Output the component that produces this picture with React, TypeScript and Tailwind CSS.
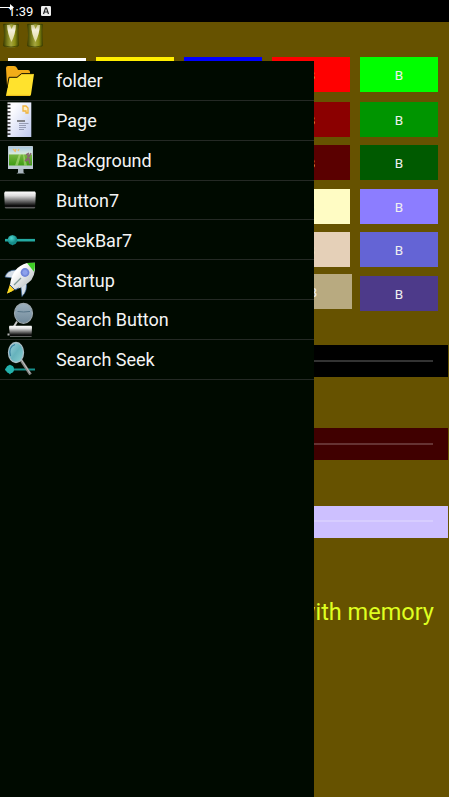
import type { ReactNode } from "react";

const svg = "block h-[39.8px] w-[40px] shrink-0 overflow-visible";

function FolderIcon() {
  return (
    <svg viewBox="0 0 40 39.8" className={svg}>
      <path d="M6 6q0-2 2-2h6q2 0 3 2l1 2h10q2 0 2 2v14H7Z" fill="#f2ad18" />
      <path d="M6 33.5 9.5 16h8l4.500-3.700L34 12l-3 20.500q-.2 1.500-2 1.500H8q-2 0-2-.5Z" fill="#ffe22d" />
      <path d="M7 26 9 15.300h8L21.500 11.600H34" fill="none" stroke="#171800" strokeWidth="1" />
      <path d="M7 33.400h22.500" stroke="#edc31d" strokeWidth="1.200" />
    </svg>
  );
}

function PageIcon() {
  const holes = [3.5, 7.2, 10.9, 14.6, 18.3, 22, 25.7, 29.4, 33.1];
  return (
    <svg viewBox="0 0 40 39.8" className={svg}>
      <defs>
        <linearGradient id="paper" x2="1" y2="1">
          <stop offset=".2" stopColor="#fdfdff" />
          <stop offset="1" stopColor="#bec9ef" />
        </linearGradient>
      </defs>
      <path d="M7.500 1.400H31.300V36H7.500Z" fill="url(#paper)" />
      {holes.map((y) => (
        <path key={y} d={`M7 ${y}h3.500`} stroke="#222" strokeWidth="1.500" />
      ))}
      <path d="M23 5v5h3v2h2V7l-2-2Z" fill="#fff0c6" stroke="#f0b43e" strokeWidth="1.300" />
      <path d="M17 20h8" stroke="#444" strokeWidth="1.200" />
      <path d="M19 22.500h9.500M19 24.500h7M19 26.500h7M19 28.500h5" stroke="#858ba5" strokeWidth=".8" />
    </svg>
  );
}

function MonitorIcon() {
  return (
    <svg viewBox="0 0 40 39.8" className={svg}>
      <defs>
        <linearGradient id="sky" x2="0" y2="1">
          <stop stopColor="#a9c8df" />
          <stop offset=".35" stopColor="#d8e9df" />
          <stop offset=".45" stopColor="#72b33e" />
          <stop offset="1" stopColor="#3d9c13" />
        </linearGradient>
      </defs>
      <path d="M18 28h5.500v3.500l1.500 1H16.500l1.500-1Z" fill="#aab5bd" />
      <rect x="8" y="5" width="25" height="23" rx=".6" fill="#bdc9d3" />
      <path d="M9 6h23v18.500H9Z" fill="url(#sky)" />
      <path d="m19 13-4 11.500h3l3-11.500Zm4 0 1 11.500h3l-3-11.500Z" fill="#c7e993" opacity=".5" />
      <path d="m13 8 2 2m1-2-1 3m4-3-1 2" stroke="#efbd68" strokeWidth="1.300" />
      <path d="m26 14 3-2m-1 1v4l-3 3 4-2 1 5m-1-7 2-4" fill="none" stroke="#896773" strokeWidth="1.500" />
    </svg>
  );
}

function ButtonIcon() {
  return (
    <svg viewBox="0 0 40 39.8" className={svg}>
      <defs>
        <linearGradient id="shade" x2="0" y2="1">
          <stop stopColor="#fff" />
          <stop offset=".25" stopColor="#ddd" />
          <stop offset=".85" stopColor="#080808" />
          <stop offset=".91" stopColor="#111" />
          <stop offset="1" stopColor="#aaa" />
        </linearGradient>
      </defs>
      <path d="M5 10.500h30l.8 1.500-.6 14.500-.7.800H5.500l-.7-.8L4.200 12Z" fill="url(#shade)" />
    </svg>
  );
}

function SeekIcon() {
  return (
    <svg viewBox="0 0 40 39.8" className={svg}>
      <defs>
        <radialGradient id="knob" cx=".4" cy=".3">
          <stop stopColor="#4fd8d0" />
          <stop offset="1" stopColor="#158c89" />
        </radialGradient>
      </defs>
      <path d="M5 19.200h30" stroke="#24aaa2" strokeWidth="2.600" />
      <path d="M12.500 14 17.200 19.200 12.500 24.500 7.800 19.200Z" fill="#1b9692" />
      <circle cx="12.500" cy="19" r="4.800" fill="url(#knob)" />
    </svg>
  );
}

function RocketIcon() {
  return (
    <svg viewBox="0 0 40 39.8" className={svg}>
      <defs>
        <linearGradient id="hull" x1="0" y1="0" x2="1" y2="1">
          <stop offset=".3" stopColor="#fff" />
          <stop offset="1" stopColor="#a7afb2" />
        </linearGradient>
      </defs>
      <path d="M16 9Q7 9 5 16l8 1Zm10 11q2 10-4 15.500l-1-9Z" fill="#d6dfe8" stroke="#416b9e" strokeWidth=".7" />
      <path d="m10 23-3 9.500 8.500-4Z" fill="#ffc82f" />
      <path d="m10 25-3 7.500 5.500-2.500Z" fill="#f7dc24" />
      <path d="M10 24Q12 6 27 2l8-.3Q36 17 28 22 22 27 15 29Z" fill="url(#hull)" />
      <path d="M27 2 35 1.700q0 5-1 9Z" fill="#3ece25" />
      <path d="m10 24 5 5 4-2" fill="none" stroke="#294f86" strokeWidth="1" />
      <path d="m14 24 7-7" stroke="#7e9795" strokeWidth="1.200" />
      <circle cx="25" cy="11.500" r="4.400" fill="#6d82d9" />
      <circle cx="25" cy="11.500" r="3" fill="#8da1ed" stroke="#7187d5" strokeWidth=".7" />
    </svg>
  );
}

function SearchButtonIcon() {
  return (
    <svg viewBox="0 0 40 39.8" className={svg}>
      <defs>
        <linearGradient id="lensGrey" x2="0" y2="1">
          <stop stopColor="#9cb1be" />
          <stop offset="1" stopColor="#71899a" />
        </linearGradient>
      </defs>
      <path d="m17 20.500-3 5" stroke="#c8c8c8" strokeWidth="2" />
      <ellipse cx="23.500" cy="12.300" rx="9" ry="10" fill="url(#lensGrey)" stroke="#9ba7ad" strokeWidth="1.200" />
      <path d="M17.500 10.500q6 1 12.500 0" fill="none" stroke="#557387" strokeWidth="1" />
      <path d="M9.500 24.800h22l.5 1-.4 10H10L9 26Z" fill="url(#shade)" />
      <path d="M7.500 33.500H9.500" stroke="#bbb" strokeWidth="2" />
    </svg>
  );
}

function SearchSeekIcon() {
  return (
    <svg viewBox="0 0 40 39.8" className={svg}>
      <defs>
        <linearGradient id="lensTeal" x2="1" y2="1">
          <stop stopColor="#9fd3df" />
          <stop offset=".5" stopColor="#67b3bd" />
          <stop offset="1" stopColor="#8bd0d0" />
        </linearGradient>
      </defs>
      <path d="M5 29.500h30" stroke="#168f8c" strokeWidth="2" />
      <path d="m10 24.500 4 5-4 5-5-5Z" fill="#20a8a4" />
      <circle cx="10" cy="29.300" r="4" fill="#24b2ac" />
      <path d="m21 20 9.500 14.500" stroke="#858585" strokeWidth="3" />
      <path d="m21.500 20 8.500 13" stroke="#c5c5c5" strokeWidth="1" />
      <ellipse cx="16" cy="12.500" rx="7.500" ry="10" fill="url(#lensTeal)" stroke="#a9bfc7" strokeWidth="1.300" />
      <path d="M10.500 16Q8 7 15 4.500" fill="none" stroke="#387f9e" strokeWidth="1.200" />
    </svg>
  );
}

const menu: { label: string; icon: ReactNode }[] = [
  { label: "folder", icon: <FolderIcon /> },
  { label: "Page", icon: <PageIcon /> },
  { label: "Background", icon: <MonitorIcon /> },
  { label: "Button7", icon: <ButtonIcon /> },
  { label: "SeekBar7", icon: <SeekIcon /> },
  { label: "Startup", icon: <RocketIcon /> },
  { label: "Search Button", icon: <SearchButtonIcon /> },
  { label: "Search Seek", icon: <SearchSeekIcon /> },
];

function Barrel() {
  return (
    <svg viewBox="0 0 18 27" className="h-[27px] w-[18px]">
      <defs>
        <linearGradient id="barrel">
          <stop stopColor="#343600" />
          <stop offset=".25" stopColor="#747718" />
          <stop offset=".5" stopColor="#a5a63f" />
          <stop offset=".75" stopColor="#8b8d12" />
          <stop offset="1" stopColor="#353900" />
        </linearGradient>
        <linearGradient id="shine" x2="0" y2="1">
          <stop stopColor="#cbc68b" />
          <stop offset=".3" stopColor="#f5f0dc" />
          <stop offset="1" stopColor="#ded99e" />
        </linearGradient>
      </defs>
      <path d="M1 2Q9 .5 17 2q-1 6-.5 11 0 6 .5 11-8 3-16 0 1-6 1-11Q2 7 1 2Z" fill="url(#barrel)" />
      <path d="M5 3h3l1.500 4L11.500 3H14q-.5 9-4.500 17Q5.500 12 5 3Z" fill="url(#shine)" />
      <path d="M2 2.500q7-1.500 14 0M2 24q7 2 14 0" stroke="#343600" fill="none" opacity=".7" />
    </svg>
  );
}

function Swatch({ className }: { className: string }) {
  return (
    <div className={`flex h-[34.7px] w-[78px] shrink-0 items-center justify-center pt-px text-[13.500px] text-[#f0f0f0] ${className}`}>
      B
    </div>
  );
}

function SeekTrack({ className, line }: { className: string; line: string }) {
  return (
    <div className={`flex h-8 w-[448px] items-center px-[15px] pb-px ${className}`}>
      <div className={`h-[2px] w-full ${line}`} />
    </div>
  );
}

const swatchRow = "flex justify-end gap-[10px] pr-[11px]";

export default function App() {
  return (
    <div className="relative flex h-[797px] w-[449px] flex-col overflow-hidden bg-[#665200] font-['Roboto',sans-serif]">
      <header className="relative flex h-[22px] shrink-0 items-center bg-black pl-[8px] text-white">
        <span className="w-[26px] whitespace-nowrap pt-px text-[13px] leading-[22px] tracking-[0.1px]">1:39</span>
        <svg viewBox="0 0 10 10" className="ml-[7px] h-[10px] w-[10px]">
          <rect width="10" height="10" rx="1.200" fill="#eee" />
          <path d="m2.500 8 2-6h1l2 6M3.500 6h3" fill="none" stroke="#222" strokeWidth="1.200" />
        </svg>
        <svg viewBox="0 0 14 8" className="absolute left-0 top-[3px] h-[8px] w-[14px]">
          <path d="M0 4.500h12" stroke="#fff" strokeWidth="1" />
          <path d="m10 1 4 3.500-4 3Z" fill="#fff" />
        </svg>
      </header>

      <div className="flex h-[35px] shrink-0 gap-[6px] pl-[2px]">
        <Barrel />
        <Barrel />
      </div>

      <main className="flex flex-col">
        <div className={swatchRow}>
          <Swatch className="mt-[1.300px] bg-white" />
          <Swatch className="bg-[#ffee00]" />
          <Swatch className="bg-[#0000ff]" />
          <Swatch className="bg-[#ff0000]" />
          <Swatch className="bg-[#00ff00]" />
        </div>
        <div className={`mt-[9px] ${swatchRow}`}>
          <Swatch className="bg-[#8b0000]" />
          <Swatch className="bg-[#009500]" />
        </div>
        <div className={`mt-[8.600px] ${swatchRow}`}>
          <Swatch className="bg-[#5a0000]" />
          <Swatch className="bg-[#005a00]" />
        </div>
        <div className={`mt-[9px] ${swatchRow}`}>
          <Swatch className="bg-[#fffcc4]" />
          <Swatch className="bg-[#8c7dff]" />
        </div>
        <div className={`mt-[8.500px] ${swatchRow}`}>
          <Swatch className="bg-[#e5d0b8]" />
          <Swatch className="bg-[#6464d5]" />
        </div>
        <div className={`mt-[7.600px] ${swatchRow}`}>
          <Swatch className="-mr-[2px] bg-[#b8aa80]" />
          <Swatch className="mt-[2px] bg-[#4d3a8a]" />
        </div>
        <SeekTrack className="mt-[34px] bg-black" line="bg-[#333333]" />
        <SeekTrack className="mt-[51px] bg-[#400000]" line="bg-[#663333]" />
        <SeekTrack className="mt-[45.500px] bg-[#cdc0ff]" line="bg-[#d7cdff]" />
        <p className="mt-[59px] pr-[15px] text-right text-[23.500px] leading-[30px] text-[#dfff20]">with memory</p>
      </main>

      <nav className="absolute bottom-0 left-0 top-[61px] w-[314px] bg-[#000a00]">
        {menu.map(({ label, icon }) => (
          <div key={label} className="flex h-[39.850px] items-center border-b border-[#242924] pt-[2px]">
            {icon}
            <span className="ml-[16px] text-[18px] leading-[24px] text-[#f4f4f4]">{label}</span>
          </div>
        ))}
      </nav>
    </div>
  );
}
